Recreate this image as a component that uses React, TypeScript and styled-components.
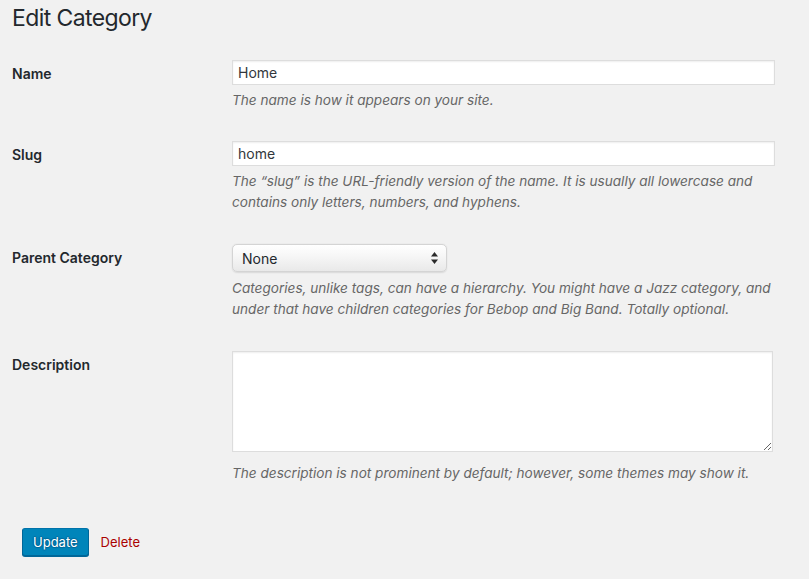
import React from "react";
import styled, { createGlobalStyle } from "styled-components";

const GlobalStyle = createGlobalStyle`
  html, body {
    margin: 0;
    padding: 0;
    background: #f1f1f1;
  }
  body {
    font-family: Inter, "Noto Sans", "Liberation Sans", sans-serif;
    color: #23282d;
    font-size: 13px;
  }
`;

const Wrap = styled.div`
  width: 809px;
  height: 579px;
  padding: 0 34px 0 12px;
  box-sizing: border-box;
  overflow: hidden;
`;

const Title = styled.h1`
  margin: 0;
  padding: 4px 0 0;
  font-size: 23px;
  font-weight: 400;
  line-height: 29px;
  letter-spacing: -0.6px;
  color: #23282d;
`;

const Form = styled.div`
  margin-top: 12px;
`;

const Row = styled.div`
  display: grid;
  grid-template-columns: 220px 1fr;
`;

const Label = styled.div<{ $top?: number }>`
  padding: ${({ $top }) => $top ?? 20}px 10px 20px 0;
  font-size: 14px;
  font-weight: 600;
  line-height: 18px;
  color: #23282d;
`;

const Field = styled.div`
  padding: 15px 0;
`;

const TextInput = styled.input`
  display: block;
  width: 100%;
  height: 25px;
  box-sizing: border-box;
  margin: 0;
  padding: 2px 5px;
  border: 1px solid #ddd;
  box-shadow: inset 0 1px 2px rgba(0, 0, 0, 0.07);
  background: #fff;
  font-family: inherit;
  font-size: 14px;
  color: #32373c;
  outline: none;
`;

const TextArea = styled.textarea`
  display: block;
  width: 541px;
  height: 101px;
  box-sizing: border-box;
  margin: 1px 0 0;
  padding: 2px 5px;
  border: 1px solid #ddd;
  box-shadow: inset 0 1px 2px rgba(0, 0, 0, 0.07);
  background: #fff;
  font-family: inherit;
  font-size: 14px;
  outline: none;
`;

const SelectBox = styled.div`
  display: flex;
  align-items: center;
  justify-content: space-between;
  width: 215px;
  height: 28px;
  margin-top: 1px;
  box-sizing: border-box;
  padding: 0 8px 0 9px;
  border: 1px solid #d4d4d4;
  border-radius: 5px;
  background: linear-gradient(#ffffff 0%, #f7f7f7 40%, #e9e9e9 100%);
  box-shadow: 0 0.5px 1.5px rgba(0, 0, 0, 0.1);
  font-size: 14px;
  color: #23282d;
`;

const Description = styled.p<{ $gap?: number }>`
  margin: ${({ $gap }) => $gap ?? 5}px 0 0;
  font-size: 13.6px;
  font-style: italic;
  line-height: 21px;
  color: #666;
`;

const Submit = styled.div`
  display: flex;
  align-items: center;
  gap: 12px;
  padding: 29px 0 0 10px;
`;

const Button = styled.button`
  height: 28px;
  padding: 0 10px 1px;
  border: 1px solid;
  border-color: #0073aa #006799 #006799;
  border-radius: 3px;
  background: #0085ba;
  box-shadow: 0 1px 0 #006799;
  color: #fff;
  font-family: inherit;
  font-size: 13px;
  line-height: 26px;
  text-shadow: 0 -1px 1px #006799, 1px 0 1px #006799, 0 1px 1px #006799,
    -1px 0 1px #006799;
  cursor: pointer;
`;

const DeleteLink = styled.a`
  color: #a00;
  font-size: 13px;
  text-decoration: none;
  cursor: pointer;
`;

const SelectArrows = () => (
  <svg width="7" height="12" viewBox="0 0 7 12">
    <path d="M3.5 0 L7 4.5 L0 4.5 Z" fill="#2a2a2a" />
    <path d="M0 7.5 L7 7.5 L3.5 12 Z" fill="#2a2a2a" />
  </svg>
);

export default function App() {
  return (
    <Wrap>
      <GlobalStyle />
      <Title>Edit Category</Title>
      <Form>
        <Row>
          <Label>Name</Label>
          <Field>
            <TextInput defaultValue="Home" />
            <Description>The name is how it appears on your site.</Description>
          </Field>
        </Row>
        <Row>
          <Label>Slug</Label>
          <Field>
            <TextInput defaultValue="home" />
            <Description>
              The “slug” is the URL-friendly version of the name. It is usually
              all lowercase and contains only letters, numbers, and hyphens.
            </Description>
          </Field>
        </Row>
        <Row>
          <Label $top={21}>Parent Category</Label>
          <Field>
            <SelectBox>
              <span>None</span>
              <SelectArrows />
            </SelectBox>
            <Description $gap={6}>
              Categories, unlike tags, can have a hierarchy. You might have a
              Jazz category, and under that have children categories for Bebop
              and Big Band. Totally optional.
            </Description>
          </Field>
        </Row>
        <Row>
          <Label $top={21}>Description</Label>
          <Field>
            <TextArea />
            <Description $gap={11}>
              The description is not prominent by default; however, some themes
              may show it.
            </Description>
          </Field>
        </Row>
      </Form>
      <Submit>
        <Button>Update</Button>
        <DeleteLink>Delete</DeleteLink>
      </Submit>
    </Wrap>
  );
}
